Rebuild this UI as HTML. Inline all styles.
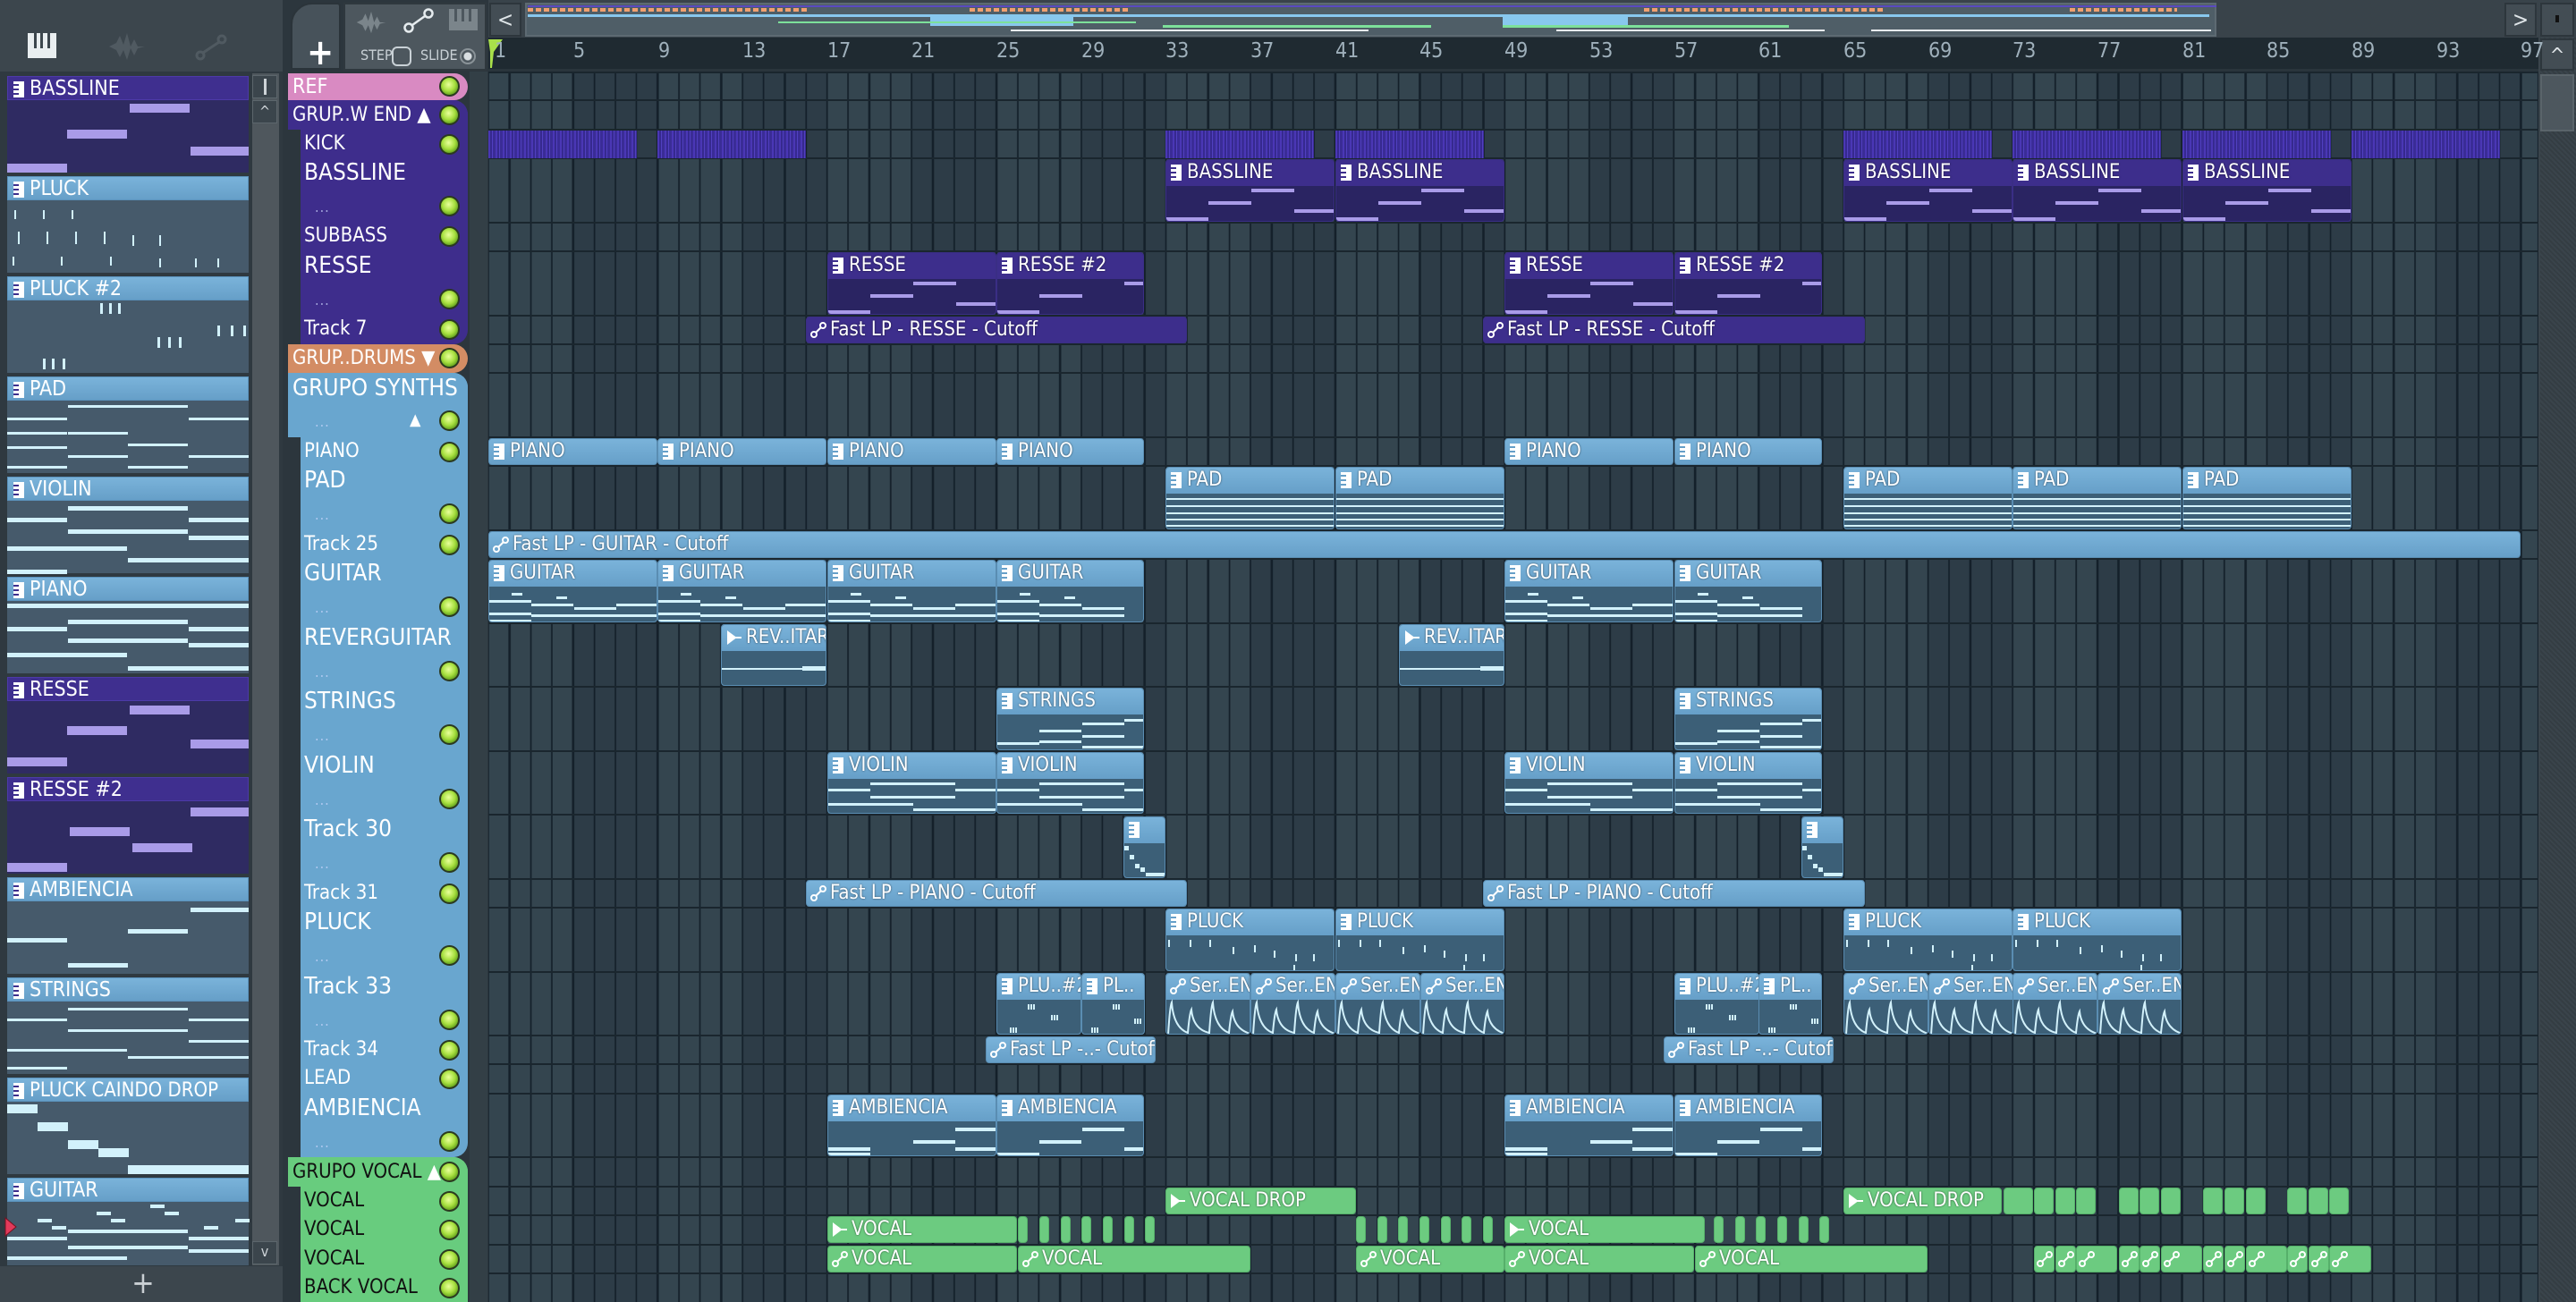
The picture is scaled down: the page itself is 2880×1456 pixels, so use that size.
<!DOCTYPE html>
<html><head><meta charset="utf-8">
<style>
*{margin:0;padding:0;box-sizing:border-box}
body{width:2880px;height:1456px;overflow:hidden;background:#3a444b;font-family:"Liberation Sans Narrow","DejaVu Sans Condensed","Liberation Sans",sans-serif;font-stretch:condensed;position:relative}
.a{position:absolute}
.grid{position:absolute;left:546px;top:80px;width:2292px;height:1376px;
background:repeating-linear-gradient(90deg,#14202a 0 2px,transparent 2px 23.67px),repeating-linear-gradient(90deg,#34454f 0 94.68px,#2d3c47 94.68px 189.36px);background-position:-1px 0,0 0}
.rl{position:absolute;left:546px;width:2292px;height:2px;background:#1a262e}
.c{position:absolute;overflow:hidden;border-radius:4px;color:#fff;white-space:nowrap;font-size:22px;line-height:28px;text-shadow:0 0 2px rgba(0,0,0,.6)}
.h{height:29px;padding-left:5px;position:relative}
.cp{background:#2a2462;border:1px solid #3a2e85}
.cp .h,.cp.s{background:#3d2e8c}
.cb{background:#3c5f77;border:1px solid #5a8db2}
.cb .h,.cb.s{background:linear-gradient(#7ab3da,#669fc8)}
.cg{background:#6ccb80;border:1px solid #56b06a}
.c b{position:absolute;height:4px;display:block}
.cp b{background:#a99be8}
.cb b{background:#d2f1fb}
.pi{display:inline-block;width:12px;height:18px;vertical-align:-3px;margin-right:6px;background:repeating-linear-gradient(180deg,#fff 0 3px,#3d2e8c 3px 5px) 0 0/6px 100% no-repeat,#fff}
.cb .pi{background:repeating-linear-gradient(180deg,#fff 0 3px,#669fc8 3px 5px) 0 0/6px 100% no-repeat,#fff}
.au{display:inline-block;width:18px;height:18px;vertical-align:-3px;margin-right:4px}
.kick{position:absolute;height:31px;background:repeating-linear-gradient(90deg,#4a37b5 0 2px,#36298f 2px 4px,#5140c0 4px 5px,#3a2c96 5px 8px)}
.tn{position:absolute;color:#fff;font-size:22px;white-space:nowrap;line-height:26px}
.tt{font-size:26px}
.dots{position:absolute;color:#cfd8ff;font-size:16px;letter-spacing:1px;opacity:.7}
.led{position:absolute;left:491px;width:23px;height:23px;border-radius:50%;background:radial-gradient(circle at 45% 40%,#e8ff9a 0,#a8e040 45%,#5a9a18 80%);border:2px solid #2b3a20}
.bi{position:absolute;left:8px;width:270px;height:108px;background:#465a6b}
.bi .bh{height:27px;background:linear-gradient(#7ab3da,#669fc8);color:#fff;font-size:23px;line-height:27px;padding-left:6px;font-family:"DejaVu Sans Condensed","Liberation Sans Narrow",sans-serif;font-stretch:condensed;border:1px solid #5b93bd}
.bi.pu{background:#2f2b62}
.bi.pu .bh{background:#3f2f8f;border-color:#4d3aa8}
.bi b{position:absolute;height:5px;background:#d2f1fb}
.bi.pu b{background:#a99be8;height:10px}
.rn{position:absolute;top:44px;color:#9fb0bb;font-size:23px}
</style></head><body>

<!-- left top toolbar -->
<div class="a" style="left:0;top:0;width:320px;height:80px;background:#3c464d"></div>
<svg class="a" style="left:30px;top:36px" width="34" height="30" viewBox="0 0 34 30"><rect x="1" y="1" width="32" height="28" fill="#e9eef0"/><rect x="8" y="1" width="3" height="17" fill="#3c464d"/><rect x="15" y="1" width="3" height="17" fill="#3c464d"/><rect x="23" y="1" width="3" height="17" fill="#3c464d"/></svg>
<svg class="a" style="left:120px;top:36px" width="44" height="32" viewBox="0 0 44 32"><path d="M2 16 L10 12 L14 4 L18 14 L22 1 L26 16 L30 8 L34 16 L42 16 L34 18 L30 26 L26 18 L22 31 L18 20 L14 28 L10 20 Z" fill="#505a61"/></svg>
<svg class="a" style="left:218px;top:38px" width="36" height="30"><circle cx="6" cy="24" r="4" fill="none" stroke="#505a61" stroke-width="3"/><circle cx="30" cy="6" r="4" fill="none" stroke="#505a61" stroke-width="3"/><line x1="9" y1="21" x2="27" y2="9" stroke="#505a61" stroke-width="3"/></svg>

<!-- browser -->
<div class="a" style="left:0;top:80px;width:320px;height:1336px;background:#2f3940"></div>
<div class="a" style="left:282px;top:82px;width:30px;height:1333px;background:#4f575d"></div>
<div class="a" style="left:282px;top:84px;width:28px;height:26px;background:#3b454c;border:1px solid #5c666c"></div>
<div class="a" style="left:295px;top:88px;width:3px;height:18px;background:#cdd3d7"></div>
<div class="a" style="left:282px;top:112px;width:28px;height:26px;background:#3b454c;border:1px solid #5c666c;color:#cdd3d7;font-size:16px;text-align:center;line-height:24px">^</div>
<div class="a" style="left:282px;top:1388px;width:28px;height:26px;background:#3b454c;border:1px solid #5c666c;color:#cdd3d7;font-size:16px;text-align:center;line-height:22px">v</div>
<div class="a" style="left:0;top:1416px;width:320px;height:40px;background:#3c464d;color:#c9cfd3;font-size:34px;text-align:center;line-height:38px">+</div>

<div class="bi pu" style="top:85px"><div class="bh"><span class="pi"></span>BASSLINE</div><b style="left:137px;top:31px;width:67px"></b><b style="left:67px;top:60px;width:67px"></b><b style="left:205px;top:79px;width:65px"></b><b style="left:0;top:98px;width:67px"></b></div>
<div class="bi" style="top:197px"><div class="bh"><span class="pi"></span>PLUCK</div><b style="left:8px;top:38px;width:2px;height:10px"></b><b style="left:40px;top:38px;width:2px;height:10px"></b><b style="left:72px;top:38px;width:2px;height:10px"></b><b style="left:12px;top:62px;width:2px;height:14px"></b><b style="left:44px;top:62px;width:2px;height:14px"></b><b style="left:76px;top:62px;width:2px;height:14px"></b><b style="left:108px;top:62px;width:2px;height:14px"></b><b style="left:140px;top:66px;width:2px;height:12px"></b><b style="left:170px;top:66px;width:2px;height:12px"></b><b style="left:6px;top:90px;width:2px;height:10px"></b><b style="left:60px;top:90px;width:2px;height:10px"></b><b style="left:115px;top:90px;width:2px;height:10px"></b><b style="left:170px;top:92px;width:2px;height:10px"></b><b style="left:210px;top:92px;width:2px;height:10px"></b><b style="left:235px;top:92px;width:2px;height:10px"></b></div>
<div class="bi" style="top:309px"><div class="bh"><span class="pi"></span>PLUCK #2</div><b style="left:104px;top:30px;width:3px;height:12px"></b><b style="left:114px;top:30px;width:3px;height:12px"></b><b style="left:124px;top:30px;width:3px;height:12px"></b><b style="left:235px;top:55px;width:3px;height:12px"></b><b style="left:250px;top:55px;width:3px;height:12px"></b><b style="left:264px;top:55px;width:3px;height:12px"></b><b style="left:168px;top:68px;width:3px;height:12px"></b><b style="left:180px;top:68px;width:3px;height:12px"></b><b style="left:192px;top:68px;width:3px;height:12px"></b><b style="left:40px;top:92px;width:3px;height:12px"></b><b style="left:50px;top:92px;width:3px;height:12px"></b><b style="left:62px;top:92px;width:3px;height:12px"></b></div>
<div class="bi" style="top:421px"><div class="bh"><span class="pi"></span>PAD</div><b style="left:0;top:46px;width:67px;height:3px"></b><b style="left:68px;top:32px;width:67px;height:3px"></b><b style="left:135px;top:32px;width:67px;height:3px"></b><b style="left:203px;top:46px;width:67px;height:3px"></b><b style="left:0;top:62px;width:67px;height:3px"></b><b style="left:68px;top:62px;width:67px;height:3px"></b><b style="left:135px;top:75px;width:67px;height:3px"></b><b style="left:0;top:78px;width:67px;height:3px"></b><b style="left:68px;top:88px;width:67px;height:3px"></b><b style="left:203px;top:88px;width:67px;height:3px"></b><b style="left:0;top:100px;width:67px;height:3px"></b><b style="left:135px;top:100px;width:67px;height:3px"></b></div>
<div class="bi" style="top:533px"><div class="bh"><span class="pi"></span>VIOLIN</div><b style="left:68px;top:33px;width:67px"></b><b style="left:135px;top:33px;width:67px"></b><b style="left:0;top:46px;width:67px"></b><b style="left:203px;top:46px;width:67px"></b><b style="left:68px;top:59px;width:134px"></b><b style="left:203px;top:66px;width:67px"></b><b style="left:0;top:78px;width:134px"></b><b style="left:135px;top:91px;width:135px"></b><b style="left:0;top:104px;width:67px"></b></div>
<div class="bi" style="top:645px"><div class="bh"><span class="pi"></span>PIANO</div><b style="left:0;top:30px;width:270px"></b><b style="left:68px;top:48px;width:134px"></b><b style="left:0;top:56px;width:67px"></b><b style="left:203px;top:56px;width:67px"></b><b style="left:68px;top:69px;width:134px"></b><b style="left:203px;top:74px;width:67px"></b><b style="left:0;top:85px;width:134px"></b><b style="left:135px;top:100px;width:135px"></b></div>
<div class="bi pu" style="top:757px"><div class="bh"><span class="pi"></span>RESSE</div><b style="left:137px;top:32px;width:67px"></b><b style="left:67px;top:55px;width:67px"></b><b style="left:205px;top:70px;width:65px"></b><b style="left:0;top:90px;width:67px"></b></div>
<div class="bi pu" style="top:869px"><div class="bh"><span class="pi"></span>RESSE #2</div><b style="left:205px;top:34px;width:65px"></b><b style="left:70px;top:56px;width:67px"></b><b style="left:140px;top:74px;width:67px"></b><b style="left:0;top:96px;width:67px"></b></div>
<div class="bi" style="top:981px"><div class="bh"><span class="pi"></span>AMBIENCIA</div><b style="left:205px;top:34px;width:65px"></b><b style="left:135px;top:58px;width:67px"></b><b style="left:0;top:68px;width:67px"></b><b style="left:68px;top:96px;width:67px"></b></div>
<div class="bi" style="top:1093px"><div class="bh"><span class="pi"></span>STRINGS</div><b style="left:68px;top:34px;width:67px;height:3px"></b><b style="left:135px;top:34px;width:67px;height:3px"></b><b style="left:0;top:46px;width:67px;height:3px"></b><b style="left:203px;top:46px;width:67px;height:3px"></b><b style="left:68px;top:58px;width:134px;height:3px"></b><b style="left:203px;top:70px;width:67px;height:3px"></b><b style="left:0;top:80px;width:134px;height:3px"></b><b style="left:135px;top:88px;width:135px;height:3px"></b><b style="left:0;top:100px;width:67px;height:3px"></b></div>
<div class="bi" style="top:1205px"><div class="bh" style="font-size:22px"><span class="pi"></span>PLUCK CAINDO DROP</div><b style="left:0;top:30px;width:34px;height:10px"></b><b style="left:34px;top:50px;width:34px;height:10px"></b><b style="left:68px;top:70px;width:34px;height:10px"></b><b style="left:102px;top:79px;width:34px;height:10px"></b><b style="left:135px;top:98px;width:135px;height:10px"></b></div>
<div class="bi" style="top:1317px;height:98px"><div class="bh"><span class="pi"></span>GUITAR</div><b style="left:160px;top:30px;width:16px;height:4px"></b><b style="left:100px;top:38px;width:16px;height:4px"></b><b style="left:176px;top:38px;width:16px;height:4px"></b><b style="left:34px;top:46px;width:16px;height:4px"></b><b style="left:116px;top:46px;width:16px;height:4px"></b><b style="left:255px;top:46px;width:16px;height:4px"></b><b style="left:50px;top:54px;width:16px;height:4px"></b><b style="left:220px;top:54px;width:16px;height:4px"></b><b style="left:68px;top:58px;width:134px;height:4px"></b><b style="left:0;top:66px;width:67px;height:4px"></b><b style="left:203px;top:66px;width:67px;height:4px"></b><b style="left:68px;top:76px;width:134px;height:4px"></b><b style="left:203px;top:80px;width:67px;height:4px"></b><b style="left:0;top:88px;width:134px;height:4px"></b></div>
<svg class="a" style="left:4px;top:1360px" width="16" height="24"><path d="M2 2 L14 12 L2 22 Z" fill="#e23a5a" stroke="#7a1020" stroke-width="1"/></svg>

<!-- track header column bg -->
<div class="a" style="left:316px;top:0;width:230px;height:1456px;background:#2c363d"></div>
<div class="a" style="left:525px;top:80px;width:20px;height:1376px;background:#333f46"></div>
<!-- tabs -->
<div class="a" style="left:325px;top:3px;width:56px;height:75px;background:#47525a;border-radius:24px 4px 0 0;border:2px solid #2b343a"></div>
<div class="a" style="left:343px;top:36px;color:#fff;font-size:40px;font-weight:bold">+</div>
<div class="a" style="left:384px;top:3px;width:160px;height:76px;background:#4d575e;border:2px solid #2f383e"></div>
<svg class="a" style="left:393px;top:12px" width="44" height="26" viewBox="0 0 44 32"><path d="M2 16 L10 12 L14 4 L18 14 L22 1 L26 16 L30 8 L34 16 L42 16 L34 18 L30 26 L26 18 L22 31 L18 20 L14 28 L10 20 Z" fill="#7b858b"/></svg>
<svg class="a" style="left:450px;top:8px" width="36" height="30"><circle cx="7" cy="23" r="4.5" fill="none" stroke="#e6ecef" stroke-width="2.5"/><circle cx="29" cy="7" r="4.5" fill="none" stroke="#e6ecef" stroke-width="2.5"/><line x1="11" y1="20" x2="25" y2="10" stroke="#e6ecef" stroke-width="2.5"/></svg>
<svg class="a" style="left:502px;top:10px" width="32" height="24"><rect width="32" height="24" fill="#7b858b"/><rect x="6" width="3" height="14" fill="#4d575e"/><rect x="14" width="3" height="14" fill="#4d575e"/><rect x="22" width="3" height="14" fill="#4d575e"/></svg>
<div class="a" style="left:403px;top:52px;color:#c9d1d6;font-size:16px">STEP</div>
<div class="a" style="left:438px;top:52px;width:22px;height:22px;border:2px solid #c9d1d6;border-radius:6px"></div>
<div class="a" style="left:470px;top:52px;color:#c9d1d6;font-size:16px">SLIDE</div>
<div class="a" style="left:514px;top:54px;width:18px;height:18px;border:2px solid #8a9398;border-radius:50%;background:radial-gradient(#d9dfe2 0 4px,transparent 5px)"></div>

<!-- top nav -->
<div class="a" style="left:546px;top:0;width:2334px;height:44px;background:#39434a"></div>
<div class="a" style="left:547px;top:3px;width:36px;height:38px;background:#434d54;border:2px solid #2d363c;color:#dfe5e8;font-size:24px;text-align:center;line-height:34px">&lt;</div>
<div class="a" style="left:587px;top:3px;width:1891px;height:38px;background:#4f5e67;border:2px solid #5d6a72"></div>
<div class="a" style="left:590px;top:9px;width:312px;height:4px;background:repeating-linear-gradient(90deg,#f0a070 0 6px,transparent 6px 9px)"></div>
<div class="a" style="left:590px;top:6px;width:1888px;height:2px;background:#5a4ac0"></div>
<div class="a" style="left:1084px;top:9px;width:180px;height:4px;background:repeating-linear-gradient(90deg,#f0a070 0 6px,transparent 6px 9px)"></div>
<div class="a" style="left:1838px;top:9px;width:270px;height:4px;background:repeating-linear-gradient(90deg,#f0a070 0 6px,transparent 6px 9px)"></div>
<div class="a" style="left:2314px;top:9px;width:120px;height:4px;background:repeating-linear-gradient(90deg,#f0a070 0 6px,transparent 6px 9px)"></div>
<div class="a" style="left:590px;top:16px;width:1880px;height:3px;background:#88c8ee"></div>
<div class="a" style="left:1040px;top:19px;width:160px;height:10px;background:#88c8ee"></div>
<div class="a" style="left:1680px;top:19px;width:140px;height:10px;background:#88c8ee"></div>
<div class="a" style="left:870px;top:24px;width:400px;height:2px;background:#7de09a"></div>
<div class="a" style="left:1300px;top:28px;width:300px;height:3px;background:#7de09a"></div>
<div class="a" style="left:1680px;top:28px;width:320px;height:3px;background:#7de09a"></div>
<div class="a" style="left:1130px;top:33px;width:400px;height:2px;background:#e8ecee"></div>
<div class="a" style="left:1740px;top:33px;width:300px;height:2px;background:#e8ecee"></div>
<div class="a" style="left:2092px;top:33px;width:380px;height:2px;background:#e8ecee"></div>
<div class="a" style="left:2800px;top:3px;width:36px;height:38px;background:#434d54;border:2px solid #2d363c;color:#dfe5e8;font-size:24px;text-align:center;line-height:34px">&gt;</div>
<div class="a" style="left:2840px;top:3px;width:38px;height:38px;background:#434d54;border:2px solid #2d363c"></div>
<div class="a" style="left:2857px;top:17px;width:4px;height:8px;background:#111"></div>
<!-- right scrollbar -->
<div class="a" style="left:2840px;top:42px;width:40px;height:1414px;background:repeating-linear-gradient(45deg,#3a444b 0 2px,#343d43 2px 4px)"></div>
<div class="a" style="left:2840px;top:43px;width:38px;height:36px;background:#434d54;border:2px solid #2d363c;color:#dfe5e8;font-size:22px;text-align:center;line-height:36px">^</div>
<div class="a" style="left:2840px;top:83px;width:38px;height:64px;background:#4d575e;border:2px solid #5a646a"></div>

<!-- ruler -->
<div class="a" style="left:546px;top:42px;width:2292px;height:38px;background:#1f2a31;border-bottom:3px solid #2a353c"></div>
<svg class="a" style="left:546px;top:44px" width="18" height="32"><path d="M0 0 L16 0 L6 14 L4 32 L2 32 L2 14 Z" fill="#a9e04a"/></svg>
<div class="rn" style="left:553px">1</div><div class="rn" style="left:641px">5</div><div class="rn" style="left:736px">9</div><div class="rn" style="left:830px">13</div><div class="rn" style="left:925px">17</div><div class="rn" style="left:1019px">21</div><div class="rn" style="left:1114px">25</div><div class="rn" style="left:1209px">29</div><div class="rn" style="left:1303px">33</div><div class="rn" style="left:1398px">37</div><div class="rn" style="left:1493px">41</div><div class="rn" style="left:1587px">45</div><div class="rn" style="left:1682px">49</div><div class="rn" style="left:1777px">53</div><div class="rn" style="left:1872px">57</div><div class="rn" style="left:1966px">61</div><div class="rn" style="left:2061px">65</div><div class="rn" style="left:2156px">69</div><div class="rn" style="left:2250px">73</div><div class="rn" style="left:2345px">77</div><div class="rn" style="left:2440px">81</div><div class="rn" style="left:2534px">85</div><div class="rn" style="left:2629px">89</div><div class="rn" style="left:2724px">93</div><div class="rn" style="left:2818px">97</div>

<!-- grid -->
<div class="grid"></div>
<div class="rl" style="top:80px"></div><div class="rl" style="top:111px"></div><div class="rl" style="top:144px"></div><div class="rl" style="top:176px"></div><div class="rl" style="top:248px"></div><div class="rl" style="top:280px"></div><div class="rl" style="top:352px"></div><div class="rl" style="top:384px"></div><div class="rl" style="top:416px"></div><div class="rl" style="top:488px"></div><div class="rl" style="top:520px"></div><div class="rl" style="top:592px"></div><div class="rl" style="top:624px"></div><div class="rl" style="top:696px"></div><div class="rl" style="top:767px"></div><div class="rl" style="top:839px"></div><div class="rl" style="top:910px"></div><div class="rl" style="top:982px"></div><div class="rl" style="top:1014px"></div><div class="rl" style="top:1086px"></div><div class="rl" style="top:1157px"></div><div class="rl" style="top:1189px"></div><div class="rl" style="top:1222px"></div><div class="rl" style="top:1293px"></div><div class="rl" style="top:1326px"></div><div class="rl" style="top:1358px"></div><div class="rl" style="top:1391px"></div><div class="rl" style="top:1423px"></div>

<!-- track headers -->
<div class="a" style="left:322px;top:82px;width:201px;height:30px;background:#d98ac2;border-radius:0 16px 16px 0"></div>
<div class="a" style="left:336px;top:112px;width:187px;height:273px;background:#3e2d8c;border-radius:0 16px 16px 0"></div>
<div class="a" style="left:322px;top:112px;width:201px;height:33px;background:#3e2d8c;border-radius:0 16px 0 0"></div>
<div class="a" style="left:322px;top:385px;width:201px;height:32px;background:#d38c64;border-radius:0 16px 16px 0"></div>
<div class="a" style="left:336px;top:417px;width:187px;height:877px;background:#69a6cf;border-radius:0 16px 16px 0"></div>
<div class="a" style="left:322px;top:417px;width:201px;height:72px;background:#69a6cf;border-radius:0 16px 0 0"></div>
<div class="a" style="left:336px;top:1294px;width:187px;height:162px;background:#68cc7e;border-radius:0 16px 0 0"></div>
<div class="a" style="left:322px;top:1294px;width:201px;height:33px;background:#68cc7e;border-radius:0 16px 0 0"></div>

<div class="tn" style="left:327px;top:84px;font-size:23px">REF</div><div class="led" style="top:85px"></div>
<div class="tn" style="left:327px;top:116px">GRUP..W END &#9650;</div><div class="led" style="top:117px"></div>
<div class="tn" style="left:340px;top:148px">KICK</div><div class="led" style="top:150px"></div>
<div class="tn tt" style="left:340px;top:180px">BASSLINE</div><div class="dots" style="left:352px;top:222px">...</div><div class="led" style="top:219px"></div>
<div class="tn" style="left:340px;top:251px">SUBBASS</div><div class="led" style="top:253px"></div>
<div class="tn tt" style="left:340px;top:284px">RESSE</div><div class="dots" style="left:352px;top:326px">...</div><div class="led" style="top:323px"></div>
<div class="tn" style="left:340px;top:355px">Track 7</div><div class="led" style="top:357px"></div>
<div class="tn" style="left:327px;top:388px">GRUP..DRUMS &#9660;</div><div class="led" style="top:389px"></div>
<div class="tn tt" style="left:327px;top:421px">GRUPO SYNTHS</div><div class="tn" style="left:458px;top:457px;font-size:18px">&#9650;</div><div class="dots" style="left:352px;top:462px">...</div><div class="led" style="top:459px"></div>
<div class="tn" style="left:340px;top:492px">PIANO</div><div class="led" style="top:494px"></div>
<div class="tn tt" style="left:340px;top:524px">PAD</div><div class="dots" style="left:352px;top:566px">...</div><div class="led" style="top:563px"></div>
<div class="tn" style="left:340px;top:596px">Track 25</div><div class="led" style="top:598px"></div>
<div class="tn tt" style="left:340px;top:628px">GUITAR</div><div class="dots" style="left:352px;top:670px">...</div><div class="led" style="top:667px"></div>
<div class="tn tt" style="left:340px;top:700px">REVERGUITAR</div><div class="dots" style="left:352px;top:742px">...</div><div class="led" style="top:739px"></div>
<div class="tn tt" style="left:340px;top:771px">STRINGS</div><div class="dots" style="left:352px;top:813px">...</div><div class="led" style="top:810px"></div>
<div class="tn tt" style="left:340px;top:843px">VIOLIN</div><div class="dots" style="left:352px;top:885px">...</div><div class="led" style="top:882px"></div>
<div class="tn tt" style="left:340px;top:914px">Track 30</div><div class="dots" style="left:352px;top:956px">...</div><div class="led" style="top:953px"></div>
<div class="tn" style="left:340px;top:986px">Track 31</div><div class="led" style="top:988px"></div>
<div class="tn tt" style="left:340px;top:1018px">PLUCK</div><div class="dots" style="left:352px;top:1060px">...</div><div class="led" style="top:1057px"></div>
<div class="tn tt" style="left:340px;top:1090px">Track 33</div><div class="dots" style="left:352px;top:1132px">...</div><div class="led" style="top:1129px"></div>
<div class="tn" style="left:340px;top:1161px">Track 34</div><div class="led" style="top:1163px"></div>
<div class="tn" style="left:340px;top:1193px">LEAD</div><div class="led" style="top:1195px"></div>
<div class="tn tt" style="left:340px;top:1226px">AMBIENCIA</div><div class="dots" style="left:352px;top:1268px">...</div><div class="led" style="top:1265px"></div>
<div class="tn" style="left:327px;top:1298px;color:#111">GRUPO VOCAL <span style="color:#fff">&#9650;</span></div><div class="led" style="top:1299px"></div>
<div class="tn" style="left:340px;top:1330px;color:#111">VOCAL</div><div class="led" style="top:1332px"></div>
<div class="tn" style="left:340px;top:1362px;color:#111">VOCAL</div><div class="led" style="top:1364px"></div>
<div class="tn" style="left:340px;top:1395px;color:#111">VOCAL</div><div class="led" style="top:1397px"></div>
<div class="tn" style="left:340px;top:1427px;color:#111">BACK VOCAL</div><div class="led" style="top:1429px"></div>

<!-- KICK -->
<div class="kick" style="left:546px;top:146px;width:166px"></div>
<div class="kick" style="left:735px;top:146px;width:166px"></div>
<div class="kick" style="left:1303px;top:146px;width:166px"></div>
<div class="kick" style="left:1493px;top:146px;width:166px"></div>
<div class="kick" style="left:2061px;top:146px;width:166px"></div>
<div class="kick" style="left:2250px;top:146px;width:166px"></div>
<div class="kick" style="left:2440px;top:146px;width:166px"></div>
<div class="kick" style="left:2629px;top:146px;width:166px"></div>

<!-- BASSLINE -->
<div class="c cp" style="left:1303px;top:178px;width:189px;height:70px"><div class="h"><span class="pi"></span>BASSLINE</div><b style="left:95px;top:32px;width:48px"></b><b style="left:47px;top:46px;width:48px"></b><b style="left:143px;top:55px;width:46px"></b><b style="left:0;top:64px;width:47px"></b></div>
<div class="c cp" style="left:1493px;top:178px;width:189px;height:70px"><div class="h"><span class="pi"></span>BASSLINE</div><b style="left:95px;top:32px;width:48px"></b><b style="left:47px;top:46px;width:48px"></b><b style="left:143px;top:55px;width:46px"></b><b style="left:0;top:64px;width:47px"></b></div>
<div class="c cp" style="left:2061px;top:178px;width:189px;height:70px"><div class="h"><span class="pi"></span>BASSLINE</div><b style="left:95px;top:32px;width:48px"></b><b style="left:47px;top:46px;width:48px"></b><b style="left:143px;top:55px;width:46px"></b><b style="left:0;top:64px;width:47px"></b></div>
<div class="c cp" style="left:2250px;top:178px;width:189px;height:70px"><div class="h"><span class="pi"></span>BASSLINE</div><b style="left:95px;top:32px;width:48px"></b><b style="left:47px;top:46px;width:48px"></b><b style="left:143px;top:55px;width:46px"></b><b style="left:0;top:64px;width:47px"></b></div>
<div class="c cp" style="left:2440px;top:178px;width:189px;height:70px"><div class="h"><span class="pi"></span>BASSLINE</div><b style="left:95px;top:32px;width:48px"></b><b style="left:47px;top:46px;width:48px"></b><b style="left:143px;top:55px;width:46px"></b><b style="left:0;top:64px;width:47px"></b></div>

<!-- RESSE -->
<div class="c cp" style="left:925px;top:282px;width:189px;height:70px"><div class="h"><span class="pi"></span>RESSE</div><b style="left:95px;top:32px;width:48px"></b><b style="left:47px;top:46px;width:48px"></b><b style="left:143px;top:55px;width:46px"></b><b style="left:0;top:64px;width:47px"></b></div>
<div class="c cp" style="left:1114px;top:282px;width:165px;height:70px"><div class="h"><span class="pi"></span>RESSE #2</div><b style="left:142px;top:32px;width:23px"></b><b style="left:47px;top:46px;width:48px"></b><b style="left:0;top:64px;width:47px"></b></div>
<div class="c cp" style="left:1682px;top:282px;width:189px;height:70px"><div class="h"><span class="pi"></span>RESSE</div><b style="left:95px;top:32px;width:48px"></b><b style="left:47px;top:46px;width:48px"></b><b style="left:143px;top:55px;width:46px"></b><b style="left:0;top:64px;width:47px"></b></div>
<div class="c cp" style="left:1872px;top:282px;width:165px;height:70px"><div class="h"><span class="pi"></span>RESSE #2</div><b style="left:142px;top:32px;width:23px"></b><b style="left:47px;top:46px;width:48px"></b><b style="left:0;top:64px;width:47px"></b></div>

<!-- Track 7 automation -->
<div class="c cp s" style="left:901px;top:354px;width:426px;height:30px;padding-left:4px"><svg class="au" viewBox="0 0 18 18"><circle cx="4" cy="14" r="3" fill="none" stroke="#fff" stroke-width="2"/><circle cx="14" cy="4" r="3" fill="none" stroke="#fff" stroke-width="2"/><line x1="6" y1="12" x2="12" y2="6" stroke="#fff" stroke-width="2"/></svg>Fast LP - RESSE - Cutoff</div>
<div class="c cp s" style="left:1658px;top:354px;width:427px;height:30px;padding-left:4px"><svg class="au" viewBox="0 0 18 18"><circle cx="4" cy="14" r="3" fill="none" stroke="#fff" stroke-width="2"/><circle cx="14" cy="4" r="3" fill="none" stroke="#fff" stroke-width="2"/><line x1="6" y1="12" x2="12" y2="6" stroke="#fff" stroke-width="2"/></svg>Fast LP - RESSE - Cutoff</div>

<!-- PIANO -->
<div class="c cb s" style="left:546px;top:490px;width:189px;height:30px"><div class="h"><span class="pi"></span>PIANO</div></div>
<div class="c cb s" style="left:735px;top:490px;width:189px;height:30px"><div class="h"><span class="pi"></span>PIANO</div></div>
<div class="c cb s" style="left:925px;top:490px;width:189px;height:30px"><div class="h"><span class="pi"></span>PIANO</div></div>
<div class="c cb s" style="left:1114px;top:490px;width:165px;height:30px"><div class="h"><span class="pi"></span>PIANO</div></div>
<div class="c cb s" style="left:1682px;top:490px;width:189px;height:30px"><div class="h"><span class="pi"></span>PIANO</div></div>
<div class="c cb s" style="left:1872px;top:490px;width:165px;height:30px"><div class="h"><span class="pi"></span>PIANO</div></div>

<!-- PAD -->
<div class="c cb" style="left:1303px;top:522px;width:189px;height:70px"><div class="h"><span class="pi"></span>PAD</div><b style="left:0;top:34px;width:189px;height:2px"></b><b style="left:0;top:42px;width:189px;height:2px"></b><b style="left:0;top:50px;width:189px;height:2px"></b><b style="left:0;top:57px;width:189px;height:2px"></b><b style="left:0;top:64px;width:189px;height:2px"></b></div>
<div class="c cb" style="left:1493px;top:522px;width:189px;height:70px"><div class="h"><span class="pi"></span>PAD</div><b style="left:0;top:34px;width:189px;height:2px"></b><b style="left:0;top:42px;width:189px;height:2px"></b><b style="left:0;top:50px;width:189px;height:2px"></b><b style="left:0;top:57px;width:189px;height:2px"></b><b style="left:0;top:64px;width:189px;height:2px"></b></div>
<div class="c cb" style="left:2061px;top:522px;width:189px;height:70px"><div class="h"><span class="pi"></span>PAD</div><b style="left:0;top:34px;width:189px;height:2px"></b><b style="left:0;top:42px;width:189px;height:2px"></b><b style="left:0;top:50px;width:189px;height:2px"></b><b style="left:0;top:57px;width:189px;height:2px"></b><b style="left:0;top:64px;width:189px;height:2px"></b></div>
<div class="c cb" style="left:2250px;top:522px;width:189px;height:70px"><div class="h"><span class="pi"></span>PAD</div><b style="left:0;top:34px;width:189px;height:2px"></b><b style="left:0;top:42px;width:189px;height:2px"></b><b style="left:0;top:50px;width:189px;height:2px"></b><b style="left:0;top:57px;width:189px;height:2px"></b><b style="left:0;top:64px;width:189px;height:2px"></b></div>
<div class="c cb" style="left:2440px;top:522px;width:189px;height:70px"><div class="h"><span class="pi"></span>PAD</div><b style="left:0;top:34px;width:189px;height:2px"></b><b style="left:0;top:42px;width:189px;height:2px"></b><b style="left:0;top:50px;width:189px;height:2px"></b><b style="left:0;top:57px;width:189px;height:2px"></b><b style="left:0;top:64px;width:189px;height:2px"></b></div>

<!-- Track 25 -->
<div class="c cb s" style="left:546px;top:594px;width:2272px;height:30px;padding-left:4px"><svg class="au" viewBox="0 0 18 18"><circle cx="4" cy="14" r="3" fill="none" stroke="#fff" stroke-width="2"/><circle cx="14" cy="4" r="3" fill="none" stroke="#fff" stroke-width="2"/><line x1="6" y1="12" x2="12" y2="6" stroke="#fff" stroke-width="2"/></svg>Fast LP - GUITAR - Cutoff</div>

<!-- GUITAR -->
<div class="c cb" style="left:546px;top:626px;width:189px;height:70px"><div class="h"><span class="pi"></span>GUITAR</div><b style="left:25px;top:36px;width:12px;height:3px"></b><b style="left:75px;top:40px;width:12px;height:3px"></b><b style="left:0;top:44px;width:47px;height:3px"></b><b style="left:47px;top:48px;width:47px;height:3px"></b><b style="left:95px;top:52px;width:47px;height:3px"></b><b style="left:142px;top:48px;width:47px;height:3px"></b><b style="left:0;top:58px;width:47px;height:3px"></b><b style="left:47px;top:60px;width:95px;height:3px"></b><b style="left:142px;top:60px;width:47px;height:3px"></b><b style="left:0;top:66px;width:47px;height:3px"></b></div>
<div class="c cb" style="left:735px;top:626px;width:189px;height:70px"><div class="h"><span class="pi"></span>GUITAR</div><b style="left:25px;top:36px;width:12px;height:3px"></b><b style="left:75px;top:40px;width:12px;height:3px"></b><b style="left:0;top:44px;width:47px;height:3px"></b><b style="left:47px;top:48px;width:47px;height:3px"></b><b style="left:95px;top:52px;width:47px;height:3px"></b><b style="left:142px;top:48px;width:47px;height:3px"></b><b style="left:0;top:58px;width:47px;height:3px"></b><b style="left:47px;top:60px;width:95px;height:3px"></b><b style="left:142px;top:60px;width:47px;height:3px"></b><b style="left:0;top:66px;width:47px;height:3px"></b></div>
<div class="c cb" style="left:925px;top:626px;width:189px;height:70px"><div class="h"><span class="pi"></span>GUITAR</div><b style="left:25px;top:36px;width:12px;height:3px"></b><b style="left:75px;top:40px;width:12px;height:3px"></b><b style="left:0;top:44px;width:47px;height:3px"></b><b style="left:47px;top:48px;width:47px;height:3px"></b><b style="left:95px;top:52px;width:47px;height:3px"></b><b style="left:142px;top:48px;width:47px;height:3px"></b><b style="left:0;top:58px;width:47px;height:3px"></b><b style="left:47px;top:60px;width:95px;height:3px"></b><b style="left:142px;top:60px;width:47px;height:3px"></b><b style="left:0;top:66px;width:47px;height:3px"></b></div>
<div class="c cb" style="left:1114px;top:626px;width:165px;height:70px"><div class="h"><span class="pi"></span>GUITAR</div><b style="left:25px;top:36px;width:12px;height:3px"></b><b style="left:75px;top:40px;width:12px;height:3px"></b><b style="left:0;top:44px;width:47px;height:3px"></b><b style="left:47px;top:48px;width:47px;height:3px"></b><b style="left:95px;top:52px;width:47px;height:3px"></b><b style="left:0;top:58px;width:47px;height:3px"></b><b style="left:47px;top:60px;width:95px;height:3px"></b><b style="left:0;top:66px;width:47px;height:3px"></b></div>
<div class="c cb" style="left:1682px;top:626px;width:189px;height:70px"><div class="h"><span class="pi"></span>GUITAR</div><b style="left:25px;top:36px;width:12px;height:3px"></b><b style="left:75px;top:40px;width:12px;height:3px"></b><b style="left:0;top:44px;width:47px;height:3px"></b><b style="left:47px;top:48px;width:47px;height:3px"></b><b style="left:95px;top:52px;width:47px;height:3px"></b><b style="left:142px;top:48px;width:47px;height:3px"></b><b style="left:0;top:58px;width:47px;height:3px"></b><b style="left:47px;top:60px;width:95px;height:3px"></b><b style="left:142px;top:60px;width:47px;height:3px"></b><b style="left:0;top:66px;width:47px;height:3px"></b></div>
<div class="c cb" style="left:1872px;top:626px;width:165px;height:70px"><div class="h"><span class="pi"></span>GUITAR</div><b style="left:25px;top:36px;width:12px;height:3px"></b><b style="left:75px;top:40px;width:12px;height:3px"></b><b style="left:0;top:44px;width:47px;height:3px"></b><b style="left:47px;top:48px;width:47px;height:3px"></b><b style="left:95px;top:52px;width:47px;height:3px"></b><b style="left:0;top:58px;width:47px;height:3px"></b><b style="left:47px;top:60px;width:95px;height:3px"></b><b style="left:0;top:66px;width:47px;height:3px"></b></div>

<!-- REVERGUITAR -->
<div class="c cb" style="left:806px;top:698px;width:118px;height:69px"><div class="h"><svg class="au" viewBox="0 0 18 18"><path d="M2 3 L10 9 L2 15 Z M8 9 H17" stroke="#fff" stroke-width="2" fill="#fff"/></svg>REV..ITAR</div><b style="left:0;top:48px;width:118px;height:2px"></b><b style="left:90px;top:46px;width:28px;height:5px"></b></div>
<div class="c cb" style="left:1564px;top:698px;width:118px;height:69px"><div class="h"><svg class="au" viewBox="0 0 18 18"><path d="M2 3 L10 9 L2 15 Z M8 9 H17" stroke="#fff" stroke-width="2" fill="#fff"/></svg>REV..ITAR</div><b style="left:0;top:48px;width:118px;height:2px"></b><b style="left:90px;top:46px;width:28px;height:5px"></b></div>

<!-- STRINGS -->
<div class="c cb" style="left:1114px;top:769px;width:165px;height:70px"><div class="h"><span class="pi"></span>STRINGS</div><b style="left:95px;top:38px;width:47px;height:3px"></b><b style="left:142px;top:34px;width:23px;height:3px"></b><b style="left:47px;top:46px;width:47px;height:3px"></b><b style="left:95px;top:52px;width:47px;height:3px"></b><b style="left:47px;top:58px;width:47px;height:3px"></b><b style="left:0;top:60px;width:47px;height:3px"></b><b style="left:95px;top:64px;width:70px;height:3px"></b></div>
<div class="c cb" style="left:1872px;top:769px;width:165px;height:70px"><div class="h"><span class="pi"></span>STRINGS</div><b style="left:95px;top:38px;width:47px;height:3px"></b><b style="left:142px;top:34px;width:23px;height:3px"></b><b style="left:47px;top:46px;width:47px;height:3px"></b><b style="left:95px;top:52px;width:47px;height:3px"></b><b style="left:47px;top:58px;width:47px;height:3px"></b><b style="left:0;top:60px;width:47px;height:3px"></b><b style="left:95px;top:64px;width:70px;height:3px"></b></div>

<!-- VIOLIN -->
<div class="c cb" style="left:925px;top:841px;width:189px;height:69px"><div class="h"><span class="pi"></span>VIOLIN</div><b style="left:47px;top:33px;width:95px;height:3px"></b><b style="left:0;top:40px;width:47px;height:3px"></b><b style="left:142px;top:40px;width:47px;height:3px"></b><b style="left:47px;top:48px;width:95px;height:3px"></b><b style="left:0;top:56px;width:95px;height:3px"></b><b style="left:95px;top:62px;width:94px;height:3px"></b></div>
<div class="c cb" style="left:1114px;top:841px;width:165px;height:69px"><div class="h"><span class="pi"></span>VIOLIN</div><b style="left:47px;top:33px;width:95px;height:3px"></b><b style="left:0;top:40px;width:47px;height:3px"></b><b style="left:142px;top:40px;width:23px;height:3px"></b><b style="left:47px;top:48px;width:95px;height:3px"></b><b style="left:0;top:56px;width:95px;height:3px"></b><b style="left:95px;top:62px;width:70px;height:3px"></b></div>
<div class="c cb" style="left:1682px;top:841px;width:189px;height:69px"><div class="h"><span class="pi"></span>VIOLIN</div><b style="left:47px;top:33px;width:95px;height:3px"></b><b style="left:0;top:40px;width:47px;height:3px"></b><b style="left:142px;top:40px;width:47px;height:3px"></b><b style="left:47px;top:48px;width:95px;height:3px"></b><b style="left:0;top:56px;width:95px;height:3px"></b><b style="left:95px;top:62px;width:94px;height:3px"></b></div>
<div class="c cb" style="left:1872px;top:841px;width:165px;height:69px"><div class="h"><span class="pi"></span>VIOLIN</div><b style="left:47px;top:33px;width:95px;height:3px"></b><b style="left:0;top:40px;width:47px;height:3px"></b><b style="left:142px;top:40px;width:23px;height:3px"></b><b style="left:47px;top:48px;width:95px;height:3px"></b><b style="left:0;top:56px;width:95px;height:3px"></b><b style="left:95px;top:62px;width:70px;height:3px"></b></div>

<!-- Track 30 -->
<div class="c cb" style="left:1256px;top:913px;width:47px;height:69px"><div class="h"><span class="pi"></span></div><b style="left:0;top:32px;width:5px;height:5px"></b><b style="left:6px;top:42px;width:5px;height:5px"></b><b style="left:12px;top:52px;width:5px;height:5px"></b><b style="left:18px;top:56px;width:5px;height:5px"></b><b style="left:24px;top:62px;width:23px;height:4px"></b></div>
<div class="c cb" style="left:2014px;top:913px;width:47px;height:69px"><div class="h"><span class="pi"></span></div><b style="left:0;top:32px;width:5px;height:5px"></b><b style="left:6px;top:42px;width:5px;height:5px"></b><b style="left:12px;top:52px;width:5px;height:5px"></b><b style="left:18px;top:56px;width:5px;height:5px"></b><b style="left:24px;top:62px;width:23px;height:4px"></b></div>

<!-- Track 31 -->
<div class="c cb s" style="left:901px;top:984px;width:426px;height:30px;padding-left:4px"><svg class="au" viewBox="0 0 18 18"><circle cx="4" cy="14" r="3" fill="none" stroke="#fff" stroke-width="2"/><circle cx="14" cy="4" r="3" fill="none" stroke="#fff" stroke-width="2"/><line x1="6" y1="12" x2="12" y2="6" stroke="#fff" stroke-width="2"/></svg>Fast LP - PIANO - Cutoff</div>
<div class="c cb s" style="left:1658px;top:984px;width:427px;height:30px;padding-left:4px"><svg class="au" viewBox="0 0 18 18"><circle cx="4" cy="14" r="3" fill="none" stroke="#fff" stroke-width="2"/><circle cx="14" cy="4" r="3" fill="none" stroke="#fff" stroke-width="2"/><line x1="6" y1="12" x2="12" y2="6" stroke="#fff" stroke-width="2"/></svg>Fast LP - PIANO - Cutoff</div>

<!-- PLUCK -->
<div class="c cb" style="left:1303px;top:1016px;width:189px;height:70px"><div class="h"><span class="pi"></span>PLUCK</div><b style="left:2px;top:34px;width:2px;height:8px"></b><b style="left:26px;top:34px;width:2px;height:8px"></b><b style="left:48px;top:34px;width:2px;height:8px"></b><b style="left:74px;top:42px;width:2px;height:8px"></b><b style="left:98px;top:40px;width:2px;height:8px"></b><b style="left:120px;top:46px;width:2px;height:8px"></b><b style="left:144px;top:50px;width:2px;height:8px"></b><b style="left:164px;top:50px;width:2px;height:8px"></b><b style="left:142px;top:62px;width:2px;height:6px"></b></div>
<div class="c cb" style="left:1493px;top:1016px;width:189px;height:70px"><div class="h"><span class="pi"></span>PLUCK</div><b style="left:2px;top:34px;width:2px;height:8px"></b><b style="left:26px;top:34px;width:2px;height:8px"></b><b style="left:48px;top:34px;width:2px;height:8px"></b><b style="left:74px;top:42px;width:2px;height:8px"></b><b style="left:98px;top:40px;width:2px;height:8px"></b><b style="left:120px;top:46px;width:2px;height:8px"></b><b style="left:144px;top:50px;width:2px;height:8px"></b><b style="left:164px;top:50px;width:2px;height:8px"></b><b style="left:142px;top:62px;width:2px;height:6px"></b></div>
<div class="c cb" style="left:2061px;top:1016px;width:189px;height:70px"><div class="h"><span class="pi"></span>PLUCK</div><b style="left:2px;top:34px;width:2px;height:8px"></b><b style="left:26px;top:34px;width:2px;height:8px"></b><b style="left:48px;top:34px;width:2px;height:8px"></b><b style="left:74px;top:42px;width:2px;height:8px"></b><b style="left:98px;top:40px;width:2px;height:8px"></b><b style="left:120px;top:46px;width:2px;height:8px"></b><b style="left:144px;top:50px;width:2px;height:8px"></b><b style="left:164px;top:50px;width:2px;height:8px"></b><b style="left:142px;top:62px;width:2px;height:6px"></b></div>
<div class="c cb" style="left:2250px;top:1016px;width:189px;height:70px"><div class="h"><span class="pi"></span>PLUCK</div><b style="left:2px;top:34px;width:2px;height:8px"></b><b style="left:26px;top:34px;width:2px;height:8px"></b><b style="left:48px;top:34px;width:2px;height:8px"></b><b style="left:74px;top:42px;width:2px;height:8px"></b><b style="left:98px;top:40px;width:2px;height:8px"></b><b style="left:120px;top:46px;width:2px;height:8px"></b><b style="left:144px;top:50px;width:2px;height:8px"></b><b style="left:164px;top:50px;width:2px;height:8px"></b><b style="left:142px;top:62px;width:2px;height:6px"></b></div>

<!-- Track 33 -->
<div class="c cb" style="left:1114px;top:1088px;width:95px;height:69px"><div class="h"><span class="pi"></span>PLU..#2</div><b style="left:34px;top:34px;width:8px;height:6px;background:repeating-linear-gradient(90deg,#d2f1fb 0 2px,transparent 2px 3px)"></b><b style="left:60px;top:46px;width:8px;height:6px;background:repeating-linear-gradient(90deg,#d2f1fb 0 2px,transparent 2px 3px)"></b><b style="left:14px;top:60px;width:8px;height:6px;background:repeating-linear-gradient(90deg,#d2f1fb 0 2px,transparent 2px 3px)"></b></div>
<div class="c cb" style="left:1209px;top:1088px;width:71px;height:69px"><div class="h"><span class="pi"></span>PL..</div><b style="left:34px;top:34px;width:8px;height:6px;background:repeating-linear-gradient(90deg,#d2f1fb 0 2px,transparent 2px 3px)"></b><b style="left:58px;top:50px;width:8px;height:6px;background:repeating-linear-gradient(90deg,#d2f1fb 0 2px,transparent 2px 3px)"></b><b style="left:10px;top:60px;width:8px;height:6px;background:repeating-linear-gradient(90deg,#d2f1fb 0 2px,transparent 2px 3px)"></b></div>
<div class="c cb" style="left:1872px;top:1088px;width:95px;height:69px"><div class="h"><span class="pi"></span>PLU..#2</div><b style="left:34px;top:34px;width:8px;height:6px;background:repeating-linear-gradient(90deg,#d2f1fb 0 2px,transparent 2px 3px)"></b><b style="left:60px;top:46px;width:8px;height:6px;background:repeating-linear-gradient(90deg,#d2f1fb 0 2px,transparent 2px 3px)"></b><b style="left:14px;top:60px;width:8px;height:6px;background:repeating-linear-gradient(90deg,#d2f1fb 0 2px,transparent 2px 3px)"></b></div>
<div class="c cb" style="left:1966px;top:1088px;width:71px;height:69px"><div class="h"><span class="pi"></span>PL..</div><b style="left:34px;top:34px;width:8px;height:6px;background:repeating-linear-gradient(90deg,#d2f1fb 0 2px,transparent 2px 3px)"></b><b style="left:58px;top:50px;width:8px;height:6px;background:repeating-linear-gradient(90deg,#d2f1fb 0 2px,transparent 2px 3px)"></b><b style="left:10px;top:60px;width:8px;height:6px;background:repeating-linear-gradient(90deg,#d2f1fb 0 2px,transparent 2px 3px)"></b></div>

<svg width="0" height="0" style="position:absolute"><defs><path id="env" d="M2 68 Q4 36 6 32 Q8 60 24 66 Q26 44 28 40 Q30 62 48 66 Q50 36 52 32 Q54 60 70 66 Q72 46 74 42 Q76 62 94 67" fill="none" stroke="#d2f1fb" stroke-width="2"/></defs></svg>
<div class="c cb" style="left:1303px;top:1088px;width:95px;height:69px;padding-left:4px"><div class="h" style="padding-left:0;background:linear-gradient(#7ab3da,#669fc8);margin-left:-4px;padding-left:4px"><svg class="au" viewBox="0 0 18 18"><circle cx="4" cy="14" r="3" fill="none" stroke="#fff" stroke-width="2"/><circle cx="14" cy="4" r="3" fill="none" stroke="#fff" stroke-width="2"/><line x1="6" y1="12" x2="12" y2="6" stroke="#fff" stroke-width="2"/></svg>Ser..EN</div><svg class="a" style="left:0;top:0" width="95" height="69"><use href="#env"/></svg></div>
<div class="c cb" style="left:1398px;top:1088px;width:95px;height:69px"><div class="h" style="background:linear-gradient(#7ab3da,#669fc8)"><svg class="au" viewBox="0 0 18 18"><circle cx="4" cy="14" r="3" fill="none" stroke="#fff" stroke-width="2"/><circle cx="14" cy="4" r="3" fill="none" stroke="#fff" stroke-width="2"/><line x1="6" y1="12" x2="12" y2="6" stroke="#fff" stroke-width="2"/></svg>Ser..EN</div><svg class="a" style="left:0;top:0" width="95" height="69"><use href="#env"/></svg></div>
<div class="c cb" style="left:1493px;top:1088px;width:95px;height:69px"><div class="h" style="background:linear-gradient(#7ab3da,#669fc8)"><svg class="au" viewBox="0 0 18 18"><circle cx="4" cy="14" r="3" fill="none" stroke="#fff" stroke-width="2"/><circle cx="14" cy="4" r="3" fill="none" stroke="#fff" stroke-width="2"/><line x1="6" y1="12" x2="12" y2="6" stroke="#fff" stroke-width="2"/></svg>Ser..EN</div><svg class="a" style="left:0;top:0" width="95" height="69"><use href="#env"/></svg></div>
<div class="c cb" style="left:1588px;top:1088px;width:94px;height:69px"><div class="h" style="background:linear-gradient(#7ab3da,#669fc8)"><svg class="au" viewBox="0 0 18 18"><circle cx="4" cy="14" r="3" fill="none" stroke="#fff" stroke-width="2"/><circle cx="14" cy="4" r="3" fill="none" stroke="#fff" stroke-width="2"/><line x1="6" y1="12" x2="12" y2="6" stroke="#fff" stroke-width="2"/></svg>Ser..EN</div><svg class="a" style="left:0;top:0" width="95" height="69"><use href="#env"/></svg></div>
<div class="c cb" style="left:2061px;top:1088px;width:95px;height:69px"><div class="h" style="background:linear-gradient(#7ab3da,#669fc8)"><svg class="au" viewBox="0 0 18 18"><circle cx="4" cy="14" r="3" fill="none" stroke="#fff" stroke-width="2"/><circle cx="14" cy="4" r="3" fill="none" stroke="#fff" stroke-width="2"/><line x1="6" y1="12" x2="12" y2="6" stroke="#fff" stroke-width="2"/></svg>Ser..EN</div><svg class="a" style="left:0;top:0" width="95" height="69"><use href="#env"/></svg></div>
<div class="c cb" style="left:2156px;top:1088px;width:95px;height:69px"><div class="h" style="background:linear-gradient(#7ab3da,#669fc8)"><svg class="au" viewBox="0 0 18 18"><circle cx="4" cy="14" r="3" fill="none" stroke="#fff" stroke-width="2"/><circle cx="14" cy="4" r="3" fill="none" stroke="#fff" stroke-width="2"/><line x1="6" y1="12" x2="12" y2="6" stroke="#fff" stroke-width="2"/></svg>Ser..EN</div><svg class="a" style="left:0;top:0" width="95" height="69"><use href="#env"/></svg></div>
<div class="c cb" style="left:2250px;top:1088px;width:95px;height:69px"><div class="h" style="background:linear-gradient(#7ab3da,#669fc8)"><svg class="au" viewBox="0 0 18 18"><circle cx="4" cy="14" r="3" fill="none" stroke="#fff" stroke-width="2"/><circle cx="14" cy="4" r="3" fill="none" stroke="#fff" stroke-width="2"/><line x1="6" y1="12" x2="12" y2="6" stroke="#fff" stroke-width="2"/></svg>Ser..EN</div><svg class="a" style="left:0;top:0" width="95" height="69"><use href="#env"/></svg></div>
<div class="c cb" style="left:2345px;top:1088px;width:94px;height:69px"><div class="h" style="background:linear-gradient(#7ab3da,#669fc8)"><svg class="au" viewBox="0 0 18 18"><circle cx="4" cy="14" r="3" fill="none" stroke="#fff" stroke-width="2"/><circle cx="14" cy="4" r="3" fill="none" stroke="#fff" stroke-width="2"/><line x1="6" y1="12" x2="12" y2="6" stroke="#fff" stroke-width="2"/></svg>Ser..EN</div><svg class="a" style="left:0;top:0" width="95" height="69"><use href="#env"/></svg></div>

<!-- Track 34 -->
<div class="c cb s" style="left:1102px;top:1159px;width:190px;height:30px;padding-left:4px"><svg class="au" viewBox="0 0 18 18"><circle cx="4" cy="14" r="3" fill="none" stroke="#fff" stroke-width="2"/><circle cx="14" cy="4" r="3" fill="none" stroke="#fff" stroke-width="2"/><line x1="6" y1="12" x2="12" y2="6" stroke="#fff" stroke-width="2"/></svg>Fast LP -..- Cutoff</div>
<div class="c cb s" style="left:1860px;top:1159px;width:190px;height:30px;padding-left:4px"><svg class="au" viewBox="0 0 18 18"><circle cx="4" cy="14" r="3" fill="none" stroke="#fff" stroke-width="2"/><circle cx="14" cy="4" r="3" fill="none" stroke="#fff" stroke-width="2"/><line x1="6" y1="12" x2="12" y2="6" stroke="#fff" stroke-width="2"/></svg>Fast LP -..- Cutoff</div>

<!-- AMBIENCIA -->
<div class="c cb" style="left:925px;top:1224px;width:189px;height:69px"><div class="h"><span class="pi"></span>AMBIENCIA</div><b style="left:142px;top:36px;width:47px"></b><b style="left:95px;top:50px;width:47px"></b><b style="left:0;top:58px;width:47px"></b><b style="left:142px;top:58px;width:47px"></b><b style="left:0;top:64px;width:47px"></b></div>
<div class="c cb" style="left:1114px;top:1224px;width:165px;height:69px"><div class="h"><span class="pi"></span>AMBIENCIA</div><b style="left:95px;top:36px;width:47px"></b><b style="left:47px;top:50px;width:47px"></b><b style="left:142px;top:58px;width:23px"></b><b style="left:0;top:64px;width:47px"></b></div>
<div class="c cb" style="left:1682px;top:1224px;width:189px;height:69px"><div class="h"><span class="pi"></span>AMBIENCIA</div><b style="left:142px;top:36px;width:47px"></b><b style="left:95px;top:50px;width:47px"></b><b style="left:0;top:58px;width:47px"></b><b style="left:142px;top:58px;width:47px"></b><b style="left:0;top:64px;width:47px"></b></div>
<div class="c cb" style="left:1872px;top:1224px;width:165px;height:69px"><div class="h"><span class="pi"></span>AMBIENCIA</div><b style="left:95px;top:36px;width:47px"></b><b style="left:47px;top:50px;width:47px"></b><b style="left:142px;top:58px;width:23px"></b><b style="left:0;top:64px;width:47px"></b></div>

<!-- VOCAL rows -->
<svg width="0" height="0" style="position:absolute"><defs>
<g id="aud"><path d="M2 3 L10 9 L2 15 Z M8 9 H17" stroke="#fff" stroke-width="2" fill="#fff"/></g>
<g id="aut"><circle cx="4" cy="14" r="3" fill="none" stroke="#fff" stroke-width="2"/><circle cx="14" cy="4" r="3" fill="none" stroke="#fff" stroke-width="2"/><line x1="6" y1="12" x2="12" y2="6" stroke="#fff" stroke-width="2"/></g>
</defs></svg>
<div class="c cg" style="left:1303px;top:1328px;width:213px;height:30px;padding-left:4px"><svg class="au" viewBox="0 0 18 18"><use href="#aud"/></svg>VOCAL DROP</div>
<div class="c cg" style="left:2061px;top:1328px;width:177px;height:30px;padding-left:4px"><svg class="au" viewBox="0 0 18 18"><use href="#aud"/></svg>VOCAL DROP</div>
<div class="c cg" style="left:2240px;top:1328px;width:33px;height:30px"></div>
<div class="c cg" style="left:2274px;top:1328px;width:22px;height:30px"></div><div class="c cg" style="left:2298px;top:1328px;width:22px;height:30px"></div><div class="c cg" style="left:2321px;top:1328px;width:22px;height:30px"></div>
<div class="c cg" style="left:2369px;top:1328px;width:22px;height:30px"></div><div class="c cg" style="left:2392px;top:1328px;width:22px;height:30px"></div><div class="c cg" style="left:2416px;top:1328px;width:22px;height:30px"></div>
<div class="c cg" style="left:2463px;top:1328px;width:22px;height:30px"></div><div class="c cg" style="left:2487px;top:1328px;width:22px;height:30px"></div><div class="c cg" style="left:2511px;top:1328px;width:22px;height:30px"></div>
<div class="c cg" style="left:2557px;top:1328px;width:22px;height:30px"></div><div class="c cg" style="left:2581px;top:1328px;width:22px;height:30px"></div><div class="c cg" style="left:2604px;top:1328px;width:22px;height:30px"></div>

<div class="c cg" style="left:925px;top:1360px;width:212px;height:30px;padding-left:4px"><svg class="au" viewBox="0 0 18 18"><use href="#aud"/></svg>VOCAL</div>
<div class="c cg" style="left:1138px;top:1360px;width:11px;height:30px"></div><div class="c cg" style="left:1162px;top:1360px;width:11px;height:30px"></div><div class="c cg" style="left:1186px;top:1360px;width:11px;height:30px"></div><div class="c cg" style="left:1209px;top:1360px;width:11px;height:30px"></div><div class="c cg" style="left:1233px;top:1360px;width:11px;height:30px"></div><div class="c cg" style="left:1257px;top:1360px;width:11px;height:30px"></div><div class="c cg" style="left:1280px;top:1360px;width:11px;height:30px"></div>
<div class="c cg" style="left:1516px;top:1360px;width:11px;height:30px"></div><div class="c cg" style="left:1540px;top:1360px;width:11px;height:30px"></div><div class="c cg" style="left:1563px;top:1360px;width:11px;height:30px"></div><div class="c cg" style="left:1587px;top:1360px;width:11px;height:30px"></div><div class="c cg" style="left:1611px;top:1360px;width:11px;height:30px"></div><div class="c cg" style="left:1634px;top:1360px;width:11px;height:30px"></div><div class="c cg" style="left:1658px;top:1360px;width:11px;height:30px"></div>
<div class="c cg" style="left:1682px;top:1360px;width:224px;height:30px;padding-left:4px"><svg class="au" viewBox="0 0 18 18"><use href="#aud"/></svg>VOCAL</div>
<div class="c cg" style="left:1916px;top:1360px;width:11px;height:30px"></div><div class="c cg" style="left:1940px;top:1360px;width:11px;height:30px"></div><div class="c cg" style="left:1963px;top:1360px;width:11px;height:30px"></div><div class="c cg" style="left:1987px;top:1360px;width:11px;height:30px"></div><div class="c cg" style="left:2011px;top:1360px;width:11px;height:30px"></div><div class="c cg" style="left:2034px;top:1360px;width:11px;height:30px"></div>

<div class="c cg" style="left:925px;top:1393px;width:212px;height:30px;padding-left:4px"><svg class="au" viewBox="0 0 18 18"><use href="#aut"/></svg>VOCAL</div>
<div class="c cg" style="left:1138px;top:1393px;width:260px;height:30px;padding-left:4px"><svg class="au" viewBox="0 0 18 18"><use href="#aut"/></svg>VOCAL</div>
<div class="c cg" style="left:1516px;top:1393px;width:166px;height:30px;padding-left:4px"><svg class="au" viewBox="0 0 18 18"><use href="#aut"/></svg>VOCAL</div>
<div class="c cg" style="left:1682px;top:1393px;width:212px;height:30px;padding-left:4px"><svg class="au" viewBox="0 0 18 18"><use href="#aut"/></svg>VOCAL</div>
<div class="c cg" style="left:1895px;top:1393px;width:260px;height:30px;padding-left:4px"><svg class="au" viewBox="0 0 18 18"><use href="#aut"/></svg>VOCAL</div>
<div class="c cg" style="left:2274px;top:1393px;width:23px;height:30px;padding-left:2px"><svg class="au" viewBox="0 0 18 18"><use href="#aut"/></svg></div><div class="c cg" style="left:2298px;top:1393px;width:23px;height:30px;padding-left:2px"><svg class="au" viewBox="0 0 18 18"><use href="#aut"/></svg></div><div class="c cg" style="left:2321px;top:1393px;width:46px;height:30px;padding-left:2px"><svg class="au" viewBox="0 0 18 18"><use href="#aut"/></svg></div>
<div class="c cg" style="left:2369px;top:1393px;width:23px;height:30px;padding-left:2px"><svg class="au" viewBox="0 0 18 18"><use href="#aut"/></svg></div><div class="c cg" style="left:2392px;top:1393px;width:23px;height:30px;padding-left:2px"><svg class="au" viewBox="0 0 18 18"><use href="#aut"/></svg></div><div class="c cg" style="left:2416px;top:1393px;width:46px;height:30px;padding-left:2px"><svg class="au" viewBox="0 0 18 18"><use href="#aut"/></svg></div>
<div class="c cg" style="left:2463px;top:1393px;width:23px;height:30px;padding-left:2px"><svg class="au" viewBox="0 0 18 18"><use href="#aut"/></svg></div><div class="c cg" style="left:2487px;top:1393px;width:23px;height:30px;padding-left:2px"><svg class="au" viewBox="0 0 18 18"><use href="#aut"/></svg></div><div class="c cg" style="left:2511px;top:1393px;width:46px;height:30px;padding-left:2px"><svg class="au" viewBox="0 0 18 18"><use href="#aut"/></svg></div>
<div class="c cg" style="left:2557px;top:1393px;width:23px;height:30px;padding-left:2px"><svg class="au" viewBox="0 0 18 18"><use href="#aut"/></svg></div><div class="c cg" style="left:2581px;top:1393px;width:23px;height:30px;padding-left:2px"><svg class="au" viewBox="0 0 18 18"><use href="#aut"/></svg></div><div class="c cg" style="left:2604px;top:1393px;width:47px;height:30px;padding-left:2px"><svg class="au" viewBox="0 0 18 18"><use href="#aut"/></svg></div>

</body></html>
